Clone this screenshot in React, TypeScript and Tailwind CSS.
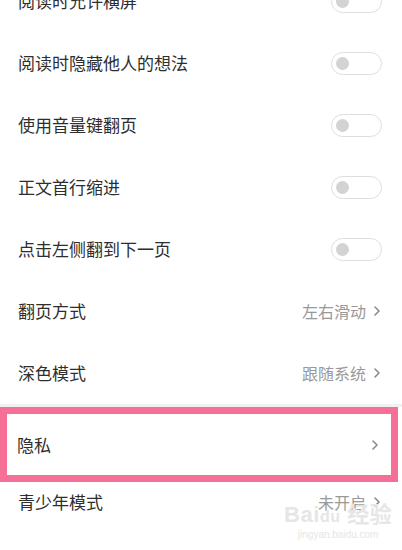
import React from "react";

type Row = { label: string; kind: "toggle" | "link"; value?: string };

const rows: Row[] = [
    { label: "阅读时允许横屏", kind: "toggle" },
    { label: "阅读时隐藏他人的想法", kind: "toggle" },
    { label: "使用音量键翻页", kind: "toggle" },
    { label: "正文首行缩进", kind: "toggle" },
    { label: "点击左侧翻到下一页", kind: "toggle" },
    { label: "翻页方式", kind: "link", value: "左右滑动" },
    { label: "深色模式", kind: "link", value: "跟随系统" },
];

const font = { fontFamily: '"Noto Sans CJK SC", "Noto Sans", sans-serif' };

const Chevron = () => (
    <svg width="8" height="12" viewBox="0 0 8 12" fill="none" stroke="#8a8a8a" strokeWidth="1.6" strokeLinecap="round" strokeLinejoin="round">
        <polyline points="2,2 6,6 2,10" />
    </svg>
);

const Toggle = () => (
    <div className="w-[51px] h-[23px] rounded-full border-[1.5px] border-[#dedede] bg-white flex items-center pl-[4px]">
        <div className="w-[13px] h-[13px] rounded-full bg-[#d3d3d3]" />
    </div>
);

const SettingRow = ({ row }: { row: Row }) => (
    <div className="h-[62px] flex items-center justify-between pl-[18px] pr-[20px]">
        <span className="text-[17px] text-[#2e2e2e]">{row.label}</span>
        {row.kind === "toggle" ? (
            <Toggle />
        ) : (
            <div className="flex items-center gap-[7px] pr-[1px]">
                <span className="text-[16px] text-[#999]">{row.value}</span>
                <Chevron />
            </div>
        )}
    </div>
);

export default function App() {
    return (
        <div className="relative w-[402px] h-[550px] overflow-hidden bg-white" style={font}>
            <div className="-mt-[30px]">
                {rows.map((r) => (
                    <SettingRow key={r.label} row={r} />
                ))}
            </div>

            <div className="h-[3px] bg-[#f1f1f1]" />

            {/* highlighted row */}
            <div className="w-[398px] h-[75px] border-[7px] border-[#f56f96] bg-white flex items-center justify-between pl-[10px] pr-[12px]">
                <span className="text-[17px] text-[#2e2e2e]">隐私</span>
                <Chevron />
            </div>

            <div className="h-[40px] flex items-center justify-between pl-[18px] pr-[21px]">
                <span className="text-[17px] text-[#2e2e2e]">青少年模式</span>
                <div className="flex items-center gap-[7px]">
                    <span className="text-[16px] text-[#999]">未开启</span>
                    <Chevron />
                </div>
            </div>

            {/* watermark */}
            <div className="absolute left-[284px] top-[504px] flex flex-col items-center text-[#e6e6e6] pointer-events-none">
                <span className="text-[22px] font-bold leading-none tracking-wide" style={{ fontFamily: '"Liberation Sans", "Noto Sans CJK SC", sans-serif' }}>
                    Bai<span className="text-[16px]">du</span> 经验
                </span>
                <span className="text-[10px] leading-none mt-[4px]" style={{ fontFamily: '"Liberation Sans", sans-serif' }}>
                    jingyan.baidu.com
                </span>
            </div>
        </div>
    );
}
